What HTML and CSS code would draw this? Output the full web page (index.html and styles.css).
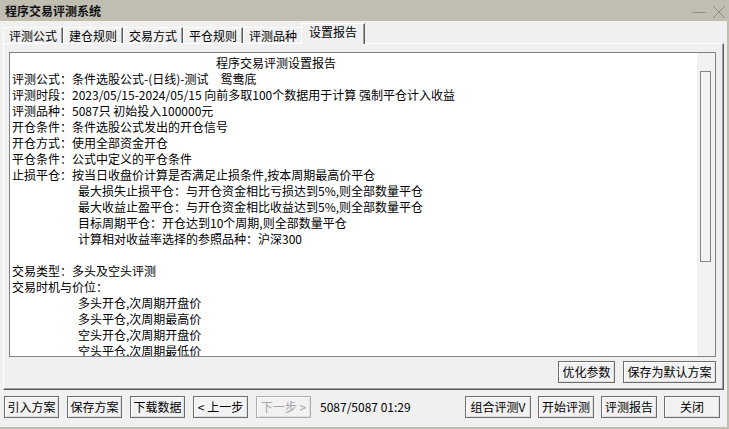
FILE: index.html
```html
<!DOCTYPE html>
<html lang="zh-CN">
<head>
<meta charset="utf-8">
<title>程序交易评测系统</title>
<link rel="stylesheet" href="styles.css">
</head>
<body>
<div class="win">
  <div class="titlebar">
    <span class="title">程序交易评测系统</span>
    <div class="ctrls">
      <svg class="ctrl" width="14" height="14" viewBox="0 0 14 14"><line x1="0.5" y1="7.5" x2="13.5" y2="7.5" stroke="#8e8c86" stroke-width="1"/></svg>
      <svg class="ctrl" width="14" height="14" viewBox="0 0 14 14"><path d="M1 1 L13 13 M13 1 L1 13" stroke="#8e8c86" stroke-width="1" fill="none"/></svg>
    </div>
  </div>
  <div class="client">
    <div class="tabs">
      <div class="tab">评测公式</div>
      <div class="tab">建仓规则</div>
      <div class="tab">交易方式</div>
      <div class="tab">平仓规则</div>
      <div class="tab">评测品种</div>
      <div class="tab active">设置报告</div>
    </div>
    <div class="page">
      <div class="report">
        <div class="text">
          <div class="line center">程序交易评测设置报告</div>
          <div class="line">评测公式：条件选股公式-(日线)-测试　鸳鸯底</div>
          <div class="line">评测时段：2023/05/15-2024/05/15 向前多取100个数据用于计算 强制平仓计入收益</div>
          <div class="line">评测品种：5087只 初始投入100000元</div>
          <div class="line">开仓条件：条件选股公式发出的开仓信号</div>
          <div class="line">开仓方式：使用全部资金开仓</div>
          <div class="line">平仓条件：公式中定义的平仓条件</div>
          <div class="line">止损平仓：按当日收盘价计算是否满足止损条件,按本周期最高价平仓</div>
          <div class="line indent">最大损失止损平仓：与开仓资金相比亏损达到5%,则全部数量平仓</div>
          <div class="line indent">最大收益止盈平仓：与开仓资金相比收益达到5%,则全部数量平仓</div>
          <div class="line indent">目标周期平仓：开仓达到10个周期,则全部数量平仓</div>
          <div class="line indent">计算相对收益率选择的参照品种：沪深300</div>
          <div class="line"> </div>
          <div class="line">交易类型：多头及空头评测</div>
          <div class="line">交易时机与价位：</div>
          <div class="line indent">多头开仓,次周期开盘价</div>
          <div class="line indent">多头平仓,次周期最高价</div>
          <div class="line indent">空头开仓,次周期开盘价</div>
          <div class="line indent">空头平仓,次周期最低价</div>
        </div>
        <div class="vscroll"><div class="thumb"></div></div>
      </div>
      <div class="page-actions">
        <button class="btn w57">优化参数</button>
        <button class="btn w93">保存为默认方案</button>
      </div>
    </div>
    <div class="footer">
      <div class="group">
        <button class="btn w55">引入方案</button>
        <button class="btn w55">保存方案</button>
        <button class="btn w55">下载数据</button>
        <button class="btn w55">&lt; 上一步</button>
        <button class="btn w55 disabled">下一步 &gt;</button>
        <span class="status">5087/5087 01:29</span>
      </div>
      <div class="group right">
        <button class="btn w66">组合评测V</button>
        <button class="btn w56">开始评测</button>
        <button class="btn w56">评测报告</button>
        <button class="btn w56">关闭</button>
      </div>
    </div>
  </div>
</div>
</body>
</html>
```

FILE: styles.css
```css
* { box-sizing: border-box; }
html, body {
  margin: 0;
  padding: 0;
}
body {
  width: 729px;
  height: 429px;
  overflow: hidden;
  background: #c0bdb1;
  font-family: "Noto Sans CJK SC", "Liberation Sans", sans-serif;
  font-size: 12px;
  color: #000;
}
.win {
  width: 727px;
  height: 427px;
  display: flex;
  flex-direction: column;
}
.titlebar {
  height: 21px;
  flex: none;
  display: flex;
  align-items: center;
  justify-content: space-between;
  padding-left: 5px;
  padding-right: 1px;
  background: #c0bdb1;
}
.title {
  font-weight: bold;
  font-size: 12px;
  line-height: 14px;
  color: #111;
}
.ctrls {
  display: flex;
  gap: 6px;
  align-items: center;
  margin-top: 2px;
}
.ctrl { display: block; }
.client {
  flex: 1;
  background: #f0f0f0;
  display: flex;
  flex-direction: column;
}
.tabs {
  height: 22px;
  flex: none;
  display: flex;
  align-items: flex-end;
  padding-left: 3px;
}
.tab {
  height: 16px;
  line-height: 15px;
  padding: 0 5px;
  border-top: 1px solid #ffffff;
  border-left: 1px solid #ffffff;
  border-right: 1px solid #5a5a5a;
  box-shadow: inset -1px 0 0 #a0a0a0;
  white-space: nowrap;
  background: #f0f0f0;
}
.tab.active {
  height: 21px;
  line-height: 16px;
  padding: 0 7px;
  margin-left: -2px;
  margin-bottom: -1px;
  position: relative;
  z-index: 2;
}
.page {
  margin-left: 3px;
  width: 721px;
  height: 347px;
  flex: none;
  border-top: 1px solid #ffffff;
  border-left: 1px solid #ffffff;
  border-right: 1px solid #5a5a5a;
  border-bottom: 1px solid #5a5a5a;
  box-shadow: inset -1px -1px 0 #a0a0a0;
  padding: 8px 0 0 5px;
}
.report {
  width: 707px;
  height: 305px;
  border: 1px solid #828282;
  background: #ffffff;
  display: flex;
}
.text {
  flex: 1;
  padding: 2px 0 0 2px;
  overflow: hidden;
}
.line {
  height: 16px;
  line-height: 16px;
  white-space: pre;
}
.line.center { padding-left: 204px; }
.line.indent { padding-left: 66px; }
.vscroll {
  width: 18px;
  flex: none;
  background: #f3f2f0;
  padding-top: 18px;
  padding-left: 3px;
}
.thumb {
  width: 11px;
  height: 191px;
  border: 1px solid #858585;
  background: #f3f2f0;
}
.page-actions {
  width: 707px;
  margin-top: 4px;
  display: flex;
  justify-content: flex-end;
  gap: 8px;
}
.btn {
  height: 22px;
  padding: 0;
  margin: 0;
  font-family: inherit;
  font-size: 12px;
  line-height: 20px;
  color: #000;
  background: #f2f2f2;
  border: 1px solid #6d6d6d;
  box-shadow: inset 1px 1px 0 #ffffff, inset -1px -1px 0 #dedede;
  white-space: nowrap;
  text-align: center;
}
.btn.disabled {
  color: #a3a3a3;
  border-color: #adadad;
}
.w55 { width: 55px; }
.w56 { width: 56px; }
.w57 { width: 57px; }
.w66 { width: 66px; }
.w93 { width: 93px; }
.footer {
  flex: 1;
  display: flex;
  justify-content: space-between;
  align-items: flex-start;
  padding: 6px 7px 0 4px;
}
.group {
  display: flex;
  align-items: center;
  gap: 8px;
}
.group.right { gap: 7px; }
.status {
  margin-left: 1px;
  white-space: pre;
  line-height: 22px;
}
```
